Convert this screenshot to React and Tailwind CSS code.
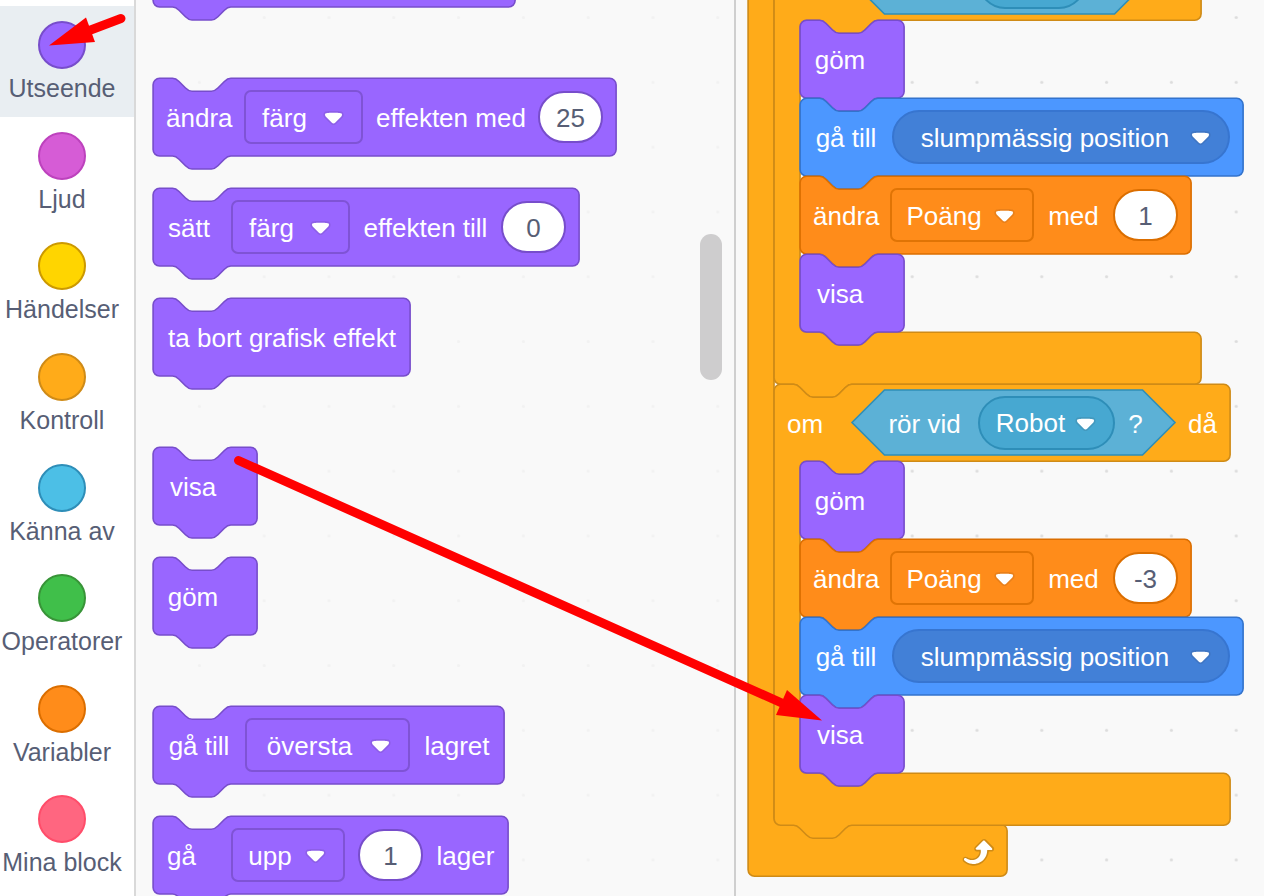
import React from 'react';

const K = 1.62;
const NOTCH = 'c 2 0 3 1 4 2 l 4 4 c 1 1 2 2 4 2 h 12 c 2 0 3 -1 4 -2 l 4 -4 c 1 -1 2 -2 4 -2';
const NUB = 'c -2 0 -3 1 -4 2 l -4 4 c -1 1 -2 2 -4 2 h -12 c -2 0 -3 -1 -4 -2 l -4 -4 c -1 -1 -2 -2 -4 -2';

const PAINT = {
  looks: { fill: '#9966FF', line: '#774DCB' },
  motion: { fill: '#4C97FF', line: '#3373CC' },
  data: { fill: '#FF8C1A', line: '#DB6E00' },
  control: { fill: '#FFAB19', line: '#CF8B17' },
};

function Shape({ kind, d }) {
  return (
    <svg className="pointer-events-none absolute inset-0 overflow-visible" width="1" height="1" aria-hidden="true">
      <path transform={`translate(0.1 0.3) scale(${K})`} d={d} fill={PAINT[kind].fill} stroke={PAINT[kind].line} strokeWidth="1" />
    </svg>
  );
}

function Block({ kind = 'looks', width, className = '', children }) {
  const w = width / K;
  const d = `M 0 4 a 4 4 0 0 1 4 -4 h 8 ${NOTCH} H ${w - 4} a 4 4 0 0 1 4 4 v 40 a 4 4 0 0 1 -4 4 H 48 ${NUB} H 4 a 4 4 0 0 1 -4 -4 z`;
  return (
    <div className={`relative h-[78px] shrink-0 ${className}`} style={{ width }}>
      <Shape kind={kind} d={d} />
      <div className="relative flex h-full items-center gap-[13px] px-[13px]">{children}</div>
    </div>
  );
}

function CBlock({ width, footWidth = width, body, loop, header, children }) {
  const w = width / K;
  const f = footWidth / K;
  const h = 77 / K;
  const b = body / K;
  const foot = 52 / K;
  const end = loop ? '' : `H 48 ${NUB}`;
  const d = `M 0 4 a 4 4 0 0 1 4 -4 h 8 ${NOTCH} H ${w - 4} a 4 4 0 0 1 4 4 v ${h - 8} a 4 4 0 0 1 -4 4 H 64 ${NUB} h -8 a 4 4 0 0 0 -4 4 v ${b - 8} a 4 4 0 0 0 4 4 h 8 ${NOTCH} H ${f - 4} a 4 4 0 0 1 4 4 v ${foot - 8} a 4 4 0 0 1 -4 4 ${end} H 4 a 4 4 0 0 1 -4 -4 z`;
  return (
    <div className="relative" style={{ width }}>
      <Shape kind="control" d={d} />
      <div className="relative flex h-[77px] items-center gap-[13px] px-[13px]">{header}</div>
      <div className="pl-[26px]">{children}</div>
      <div className="relative flex h-[52px] items-center justify-end pr-[12px]" style={{ width: footWidth }}>
        {loop && <LoopArrow />}
      </div>
    </div>
  );
}

function LoopArrow() {
  return (
    <svg width="39" height="39" viewBox="0 0 24 24" aria-hidden="true">
      <path
        d="M23.3,11c-0.3,0.6-0.9,1-1.5,1h-1.6c-0.1,1.3-0.5,2.5-1.1,3.6c-0.9,1.7-2.3,3.2-4.1,4.1c-1.7,0.9-3.6,1.2-5.5,0.9c-1.8-0.3-3.5-1.1-4.9-2.3c-0.7-0.7-0.7-1.9,0-2.6c0.6-0.6,1.6-0.7,2.3-0.2H7c0.9,0.6,1.9,0.9,2.9,0.9s1.9-0.3,2.7-0.9c1.1-0.8,1.8-2.1,1.8-3.5h-1.5c-0.9,0-1.7-0.7-1.7-1.7c0-0.4,0.2-0.9,0.5-1.2l4.4-4.4c0.7-0.6,1.7-0.6,2.4,0L23,9.2C23.5,9.7,23.6,10.4,23.3,11z"
        fill="#CF8B17"
      />
      <path
        d="M21.8,11h-2.6c0,1.5-0.3,2.9-1,4.2c-0.8,1.6-2.1,2.8-3.7,3.6c-1.5,0.8-3.3,1.1-4.9,0.8c-1.6-0.2-3.2-1-4.4-2.1c-0.4-0.3-0.4-0.9-0.1-1.2c0.3-0.4,0.9-0.4,1.2-0.1l0,0c1,0.7,2.2,1.1,3.4,1.1s2.3-0.3,3.3-1c0.9-0.6,1.6-1.5,2-2.6c0.3-0.9,0.4-1.8,0.2-2.8h-2.4c-0.4,0-0.7-0.3-0.7-0.7c0-0.2,0.1-0.3,0.2-0.4l4.4-4.4c0.3-0.3,0.7-0.3,0.9,0L22,9.8c0.3,0.3,0.4,0.6,0.3,0.9S22,11,21.8,11z"
        fill="#fff"
      />
    </svg>
  );
}

function Label({ className = '', children }) {
  return <span className={`shrink-0 whitespace-nowrap pt-[2px] text-center leading-[30px] ${className}`}>{children}</span>;
}

function Menu({ label, value, className, inset = 'pl-[2px]' }) {
  return (
    <span className={`relative block h-[54px] shrink-0 ${className}`}>
      <select
        aria-label={label}
        className={`h-full w-full appearance-none rounded-[inherit] border-0 bg-transparent pt-[2px] pr-[38px] text-center text-white outline-none ${inset}`}
      >
        <option>{value}</option>
      </select>
      <svg className="pointer-events-none absolute top-[19px] right-[17px]" width="21" height="14" viewBox="0 0 12.71 8.79" aria-hidden="true">
        <path
          d="M12.71,2.44A2.41,2.41,0,0,1,12,4.16L8.08,8.08a2.45,2.45,0,0,1-3.45,0L0.72,4.16A2.42,2.42,0,0,1,0,2.44,2.48,2.48,0,0,1,.71.71C1,0.47,1.43,0,6.36,0S11.75,0.46,12,.71A2.44,2.44,0,0,1,12.71,2.44Z"
          fill="#231f20"
          opacity="0.1"
        />
        <path
          d="M6.36,7.79a1.43,1.43,0,0,1-1-.42L1.42,3.45a1.44,1.44,0,0,1,0-2c0.56-.56,9.31-0.56,9.87,0a1.44,1.44,0,0,1,0,2L7.37,7.37A1.43,1.43,0,0,1,6.36,7.79Z"
          fill="#fff"
        />
      </svg>
    </span>
  );
}

function NumberField({ label, value, className }) {
  return (
    <input
      aria-label={label}
      defaultValue={value}
      className={`h-[52px] w-[65px] shrink-0 rounded-full border-2 bg-white pt-[2px] text-center text-[#575E75] outline-none ${className}`}
    />
  );
}

const LOOKS_MENU = 'rounded-[7px] border-2 border-[#7F53D5]';
const DATA_MENU = 'rounded-[7px] border-2 border-[#E07405]';

function Simple({ children, className }) {
  return (
    <Block width={104} className={className}>
      <Label className="w-[54px]">{children}</Label>
    </Block>
  );
}

function GoTo() {
  return (
    <Block kind="motion" width={443}>
      <Label className="w-[66px]">gå till</Label>
      <Menu label="Mål" value="slumpmässig position" inset="pl-[6px]" className="w-[338px] rounded-full border-2 border-[#3775D0] bg-[#4280D7]" />
    </Block>
  );
}

function ChangeScore({ value }) {
  return (
    <Block kind="data" width={391}>
      <Label className="w-[64px]">ändra</Label>
      <Menu label="Variabel" value="Poäng" className={`w-[144px] ${DATA_MENU}`} />
      <Label className="w-[53px]">med</Label>
      <NumberField label="Ändring" value={value} className="border-[#DB6E00]" />
    </Block>
  );
}

function Touching({ width, value, menuClass, bare }) {
  return (
    <span className="relative flex h-[65px] shrink-0 items-center gap-[13px] pl-[34px]" style={{ width }}>
      <svg className="absolute inset-0 overflow-visible" width={width} height="65" aria-hidden="true">
        <path d={`M 0 32.5 L 32.5 0 H ${width - 32.5} L ${width} 32.5 L ${width - 32.5} 65 H 32.5 Z`} fill="#5CB1D6" stroke="#2E8EB8" strokeWidth="1.6" />
      </svg>
      <Label className="relative w-[79px] pr-[2px]">{!bare && 'rör vid'}</Label>
      <Menu label="Objekt" value={value} inset="pl-[6px]" className={`rounded-full border-2 border-[#2E8EB8] bg-[#47A8D1] ${menuClass}`} />
      <Label className="relative w-[15px]">{!bare && '?'}</Label>
    </span>
  );
}

function IfHeader({ width, value, menuClass, bare }) {
  return (
    <>
      <Label className="w-[52px] text-left">{!bare && 'om'}</Label>
      <Touching width={width} value={value} menuClass={menuClass} bare={bare} />
      <Label>{!bare && 'då'}</Label>
    </>
  );
}

const CATEGORIES = [
  ['Utseende', 'bg-[#9966FF] border-[#774DCB]'],
  ['Ljud', 'bg-[#D65CD6] border-[#BD42BD]'],
  ['Händelser', 'bg-[#FFD500] border-[#CC9900]'],
  ['Kontroll', 'bg-[#FFAB19] border-[#CF8B17]'],
  ['Känna av', 'bg-[#4CBFE6] border-[#2E8EB8]'],
  ['Operatorer', 'bg-[#40BF4A] border-[#389438]'],
  ['Variabler', 'bg-[#FF8C1A] border-[#DB6E00]'],
  ['Mina block', 'bg-[#FF6680] border-[#FF4D6A]'],
];

function Dots({ id, x, color }) {
  return (
    <svg className="absolute inset-0 h-full w-full" aria-hidden="true">
      <defs>
        <pattern id={id} x={x} y="-14.9" width="64.8" height="64.8" patternUnits="userSpaceOnUse">
          <circle cx="32.4" cy="32.4" r="1.6" fill={color} />
        </pattern>
      </defs>
      <rect width="100%" height="100%" fill={`url(#${id})`} />
    </svg>
  );
}

export default function App() {
  return (
    <div className="relative flex h-screen overflow-hidden bg-[#F9F9F9] font-['Liberation_Sans',Arial,sans-serif] text-[26px] text-white">
      <nav className="w-[136px] shrink-0 border-r-2 border-[#D9D9D9] bg-white pt-[6px]">
        <div className="flex h-[885px] flex-col">
          {CATEGORIES.map(([name, color], i) => (
            <button
              key={name}
              type="button"
              className={`flex w-full flex-1 flex-col items-center pt-[15px] pr-[10px] text-[#575E75] ${i === 0 ? 'bg-[#E9EEF2]' : ''}`}
            >
              <span className={`h-[48px] w-[48px] shrink-0 rounded-full border-2 ${color}`} />
              <span className="mt-[4px] text-[25px] leading-[30px] whitespace-nowrap">{name}</span>
            </button>
          ))}
        </div>
      </nav>

      <section className="relative w-[600px] shrink-0 overflow-hidden border-r-2 border-[#CFCFCF]">
        <Dots id="palette-dots" x="95.8" color="#F2F2F2" />
        <div className="relative -mt-[71px] flex flex-col gap-[32px] pl-[17px]">
          <Block width={362} className="mb-[39px]" />
          <Block width={463}>
            <Label className="w-[65px]">ändra</Label>
            <Menu label="Effekt att ändra" value="färg" inset="pl-0" className={`w-[119px] ${LOOKS_MENU}`} />
            <Label className="w-[149px]">effekten med</Label>
            <NumberField label="Ändra med" value="25" className="border-[#774DCB]" />
          </Block>
          <Block width={426}>
            <Label className="w-[52px] pl-[2px] text-left">sätt</Label>
            <Menu label="Effekt att sätta" value="färg" inset="pl-0" className={`w-[119px] ${LOOKS_MENU}`} />
            <Label className="w-[125px]">effekten till</Label>
            <NumberField label="Sätt till" value="0" className="border-[#774DCB]" />
          </Block>
          <Block width={257} className="mb-[39px]">
            <Label className="w-[232px]">ta bort grafisk effekt</Label>
          </Block>
          <Simple>visa</Simple>
          <Simple className="mb-[39px]">göm</Simple>
          <Block width={351}>
            <Label className="w-[66px]">gå till</Label>
            <Menu label="Lager" value="översta" className={`w-[165px] ${LOOKS_MENU}`} />
            <Label className="w-[68px]">lagret</Label>
          </Block>
          <Block width={355}>
            <Label className="w-[52px] pl-[1px] text-left">gå</Label>
            <Menu label="Riktning" value="upp" className={`w-[114px] ${LOOKS_MENU}`} />
            <NumberField label="Antal lager" value="1" className="border-[#774DCB]" />
            <Label className="w-[59px]">lager</Label>
          </Block>
        </div>
        <div className="absolute top-[234px] right-[12px] h-[146px] w-[22px] rounded-full bg-[#CECDCE]" />
      </section>

      <main className="relative min-w-0 flex-1 overflow-hidden">
        <Dots id="workspace-dots" x="143.8" color="#DDDDDD" />
        <div className="absolute -top-[134px] left-[12px]">
          <CBlock width={259} body={881} loop>
            <CBlock width={427} body={312} header={<IfHeader bare width={295} value="" menuClass="w-[108px]" />}>
              <Simple>göm</Simple>
              <GoTo />
              <ChangeScore value="1" />
              <Simple>visa</Simple>
            </CBlock>
            <CBlock width={456} body={312} header={<IfHeader width={323} value="Robot" menuClass="w-[137px]" />}>
              <Simple>göm</Simple>
              <ChangeScore value="-3" />
              <GoTo />
              <Simple>visa</Simple>
            </CBlock>
          </CBlock>
        </div>
      </main>

      <svg className="pointer-events-none absolute inset-0 overflow-visible" width="1" height="1" aria-hidden="true">
        <g fill="#F00" stroke="#F00">
          <path d="M121 18.5 L88 31" strokeWidth="9" strokeLinecap="round" />
          <path d="M49 45.5 L86 17.5 L95 42 Z" stroke="none" />
          <path d="M238.5 460.5 L784 704" strokeWidth="9" strokeLinecap="round" />
          <path d="M822 720.5 L787 690 L776 715 Z" stroke="none" />
        </g>
      </svg>
    </div>
  );
}
